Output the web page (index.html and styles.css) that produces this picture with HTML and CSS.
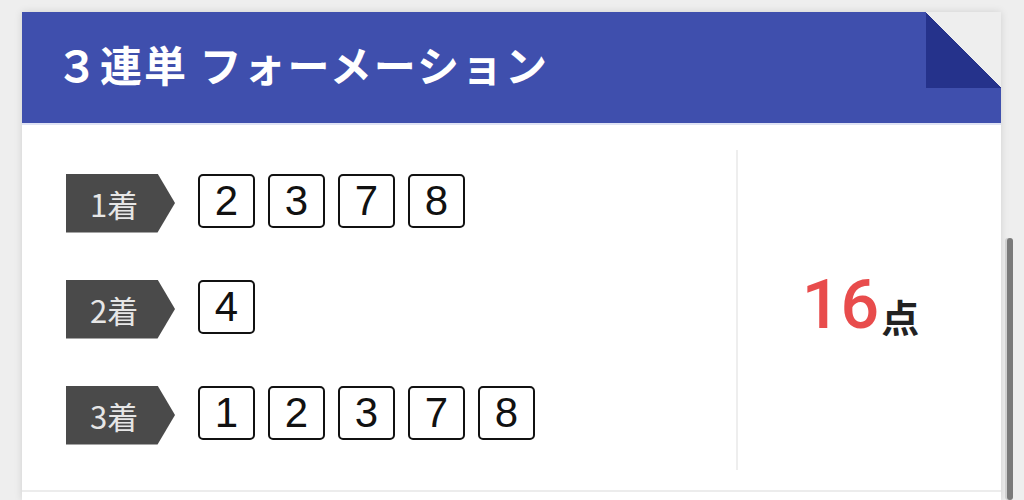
FILE: index.html
```html
<!DOCTYPE html>
<html lang="ja">
<head>
  <meta charset="UTF-8">
  <title>3連単 フォーメーション</title>
  <link rel="stylesheet" href="styles.css">
</head>
<body>
<div class="page">
  <div class="card">
    <div class="card-head">
      <h2>３連単 フォーメーション</h2>
    </div>
    <div class="card-body">
      <div class="rows">
        <div class="row">
          <span class="place">1着</span>
          <span class="num">2</span>
          <span class="num">3</span>
          <span class="num">7</span>
          <span class="num">8</span>
        </div>
        <div class="row">
          <span class="place">2着</span>
          <span class="num">4</span>
        </div>
        <div class="row">
          <span class="place">3着</span>
          <span class="num">1</span>
          <span class="num">2</span>
          <span class="num">3</span>
          <span class="num">7</span>
          <span class="num">8</span>
        </div>
      </div>
      <div class="total">
        <span class="count">16</span><span class="unit">点</span>
      </div>
    </div>
  </div>
  <div class="scrollbar"><div class="thumb"></div></div>
</div>
</body>
</html>
```

FILE: styles.css
```css
html, body {
  margin: 0;
  height: 100%;
  overflow: hidden;
}

body {
  background: #eeeeee;
  font-family: "Noto Sans CJK JP", "Noto Sans", sans-serif;
}

.page {
  display: flex;
  padding-top: 12px;
  padding-left: 22px;
  height: 488px;
}

.card {
  width: 979px;
  background: #fff;
  box-shadow: 0 0 8px rgba(0, 0, 0, 0.12);
}

.card-head {
  position: relative;
  height: 111px;
  background: #3f4fad;
  border-bottom: 2px solid #dfe3f4;
  display: flex;
  align-items: center;
  padding-left: 34px;
}

.card-head:after {
  content: "";
  position: absolute;
  top: 0;
  right: 0;
  width: 75px;
  height: 76px;
  background: linear-gradient(to top right, #25328b 50%, #eeeeee 50%);
}

.card-head h2 {
  margin: 0;
  color: #fff;
  font-size: 42px;
  font-weight: 700;
  letter-spacing: 2px;
  margin-top: -8px;
}

.card-body {
  display: flex;
  height: 365px;
  border-bottom: 2px solid #ececec;
}

.rows {
  width: 670px;
  padding: 49px 0 0 44px;
  display: flex;
  flex-direction: column;
  gap: 48px;
}

.row {
  display: flex;
  align-items: center;
  gap: 13px;
  height: 58px;
}

.place {
  width: 109px;
  height: 59px;
  box-sizing: border-box;
  padding-left: 24px;
  margin-right: 10px;
  background: #4a4a4a;
  color: #e6e6e6;
  font-size: 31px;
  font-weight: 400;
  line-height: 59px;
  clip-path: polygon(0 0, 84% 0, 100% 50%, 84% 100%, 0 100%);
}

.num {
  width: 57px;
  height: 54px;
  box-sizing: border-box;
  border: 2px solid #111;
  border-radius: 5px;
  display: flex;
  align-items: center;
  justify-content: center;
  font-family: "Liberation Sans", Arial, sans-serif;
  font-size: 42px;
  color: #111;
  margin-top: -4px;
}

.total {
  flex: 1;
  margin: 25px 0 20px;
  border-left: 2px solid #eeeeee;
  display: flex;
  align-items: center;
  justify-content: center;
  padding-bottom: 10px;
  padding-right: 18px;
}

.count {
  color: #e84c4c;
  font-family: Roboto, "Noto Sans", sans-serif;
  font-size: 68px;
  font-weight: 500;
  line-height: 1;
}

.unit {
  color: #222;
  font-size: 38px;
  font-weight: 700;
  line-height: 1;
  margin-top: 22px;
  margin-left: 2px;
}

.scrollbar {
  width: 14px;
  margin-left: 3px;
  padding-top: 226px;
}

.thumb {
  width: 6px;
  height: 262px;
  margin-left: 3px;
  background: #7a7a7a;
  border-radius: 3px;
  box-shadow: -2px 0 0 #d0d0d0;
}
```
